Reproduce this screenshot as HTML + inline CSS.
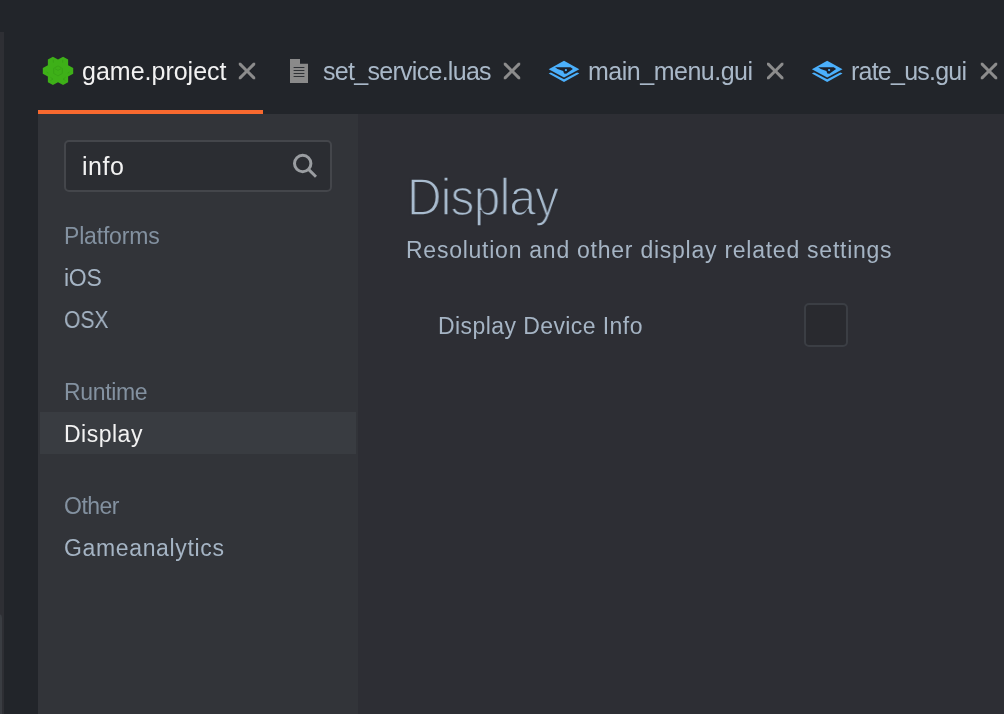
<!DOCTYPE html>
<html><head><meta charset="utf-8"><title>game.project</title>
<style>
html,body{margin:0;padding:0}
body{width:1004px;height:714px;overflow:hidden;background:#22252a;position:relative;font-family:"Liberation Sans",sans-serif;}
.abs{position:absolute}
.t{position:absolute;white-space:nowrap;line-height:1;will-change:transform;}
#strip{left:0;top:32px;width:4px;height:682px;background:#2e2f34}
#side{left:38px;top:114px;width:320px;height:600px;background:#323439}
#main{left:358px;top:114px;width:646px;height:600px;background:#2d2e34}
#uline{left:38px;top:110px;width:225px;height:4px;background:#f8692f}
.tab{font-size:25px;color:#a9b8c8;top:59px}
.tab.sel{color:#f2f2f2}
.hd{font-size:23px;color:#8391a0;left:64px}
.it{font-size:23px;color:#a5b4c4;left:64px}
#selrow{left:40px;top:412px;width:316px;height:42px;background:#393c41}
#search{left:64px;top:140px;width:264px;height:48px;border:2px solid #44464b;border-radius:5px;background:#2b2d32}
#cb{left:804px;top:303px;width:40px;height:40px;border:2px solid #3b3e44;border-radius:5px;background:#292a2f}
svg{position:absolute;overflow:visible}
</style></head><body>
<div class="abs" id="strip"></div>
<div class="abs" id="side"></div>
<div class="abs" id="main"></div>
<div class="abs" id="uline"></div>
<div class="abs" id="thumb" style="left:-8px;top:614px;width:10px;height:130px;border-radius:4px;background:#3a3d42"></div>

<!-- tabs -->
<span class="t tab sel" id="tab1" style="left:82px;letter-spacing:0px">game.project</span>
<span class="t tab" id="tab2" style="left:323px;letter-spacing:-0.71px">set_service.luas</span>
<span class="t tab" id="tab3" style="left:588px;letter-spacing:-0.49px">main_menu.gui</span>
<span class="t tab" id="tab4" style="left:851px;letter-spacing:-0.77px">rate_us.gui</span>

<!-- icons -->
<svg id="icons" width="1004" height="120" style="left:0;top:0" viewBox="0 0 1004 120">
  <g transform="translate(58,70.9)">
    <polygon fill="#3eb018" points="10.13,-5.65 15.20,-2.82 15.20,2.82 10.13,5.65 10.13,11.29 5.07,14.11 0.00,11.29 -5.07,14.11 -10.13,11.29 -10.13,5.65 -15.20,2.82 -15.20,-2.82 -10.13,-5.65 -10.13,-11.29 -5.07,-14.11 0.00,-11.29 5.07,-14.11 10.13,-11.29"/>
    <g fill="none" stroke="#38a316" stroke-width="0.9">
      <polygon points="0,-5 4.4,-2.5 4.4,2.5 0,5 -4.4,2.5 -4.4,-2.5"/>
      <polyline points="-3,-2.2 0,-0.5 3,-2.2"/>
      <polyline points="-4.6,-11 -4.6,-8.2"/><polyline points="4.6,-11 4.6,-8.2"/>
      <polyline points="-11.5,1 -9.5,2.4"/><polyline points="11.5,1 9.5,2.4"/>
      <polyline points="-7.5,6.5 -5,8.2 -7.5,9.6"/><polyline points="7.5,6.5 5,8.2 7.5,9.6"/>
    </g>
  </g>
  <g fill="#8c8c8c">
    <polygon transform="translate(247,71)" points="-8.2,-8.2 -6.1,-8.2 0,-2.1 6.1,-8.2 8.2,-8.2 8.2,-6.1 2.1,0 8.2,6.1 8.2,8.2 6.1,8.2 0,2.1 -6.1,8.2 -8.2,8.2 -8.2,6.1 -2.1,0 -8.2,-6.1"/><polygon transform="translate(512,71)" points="-8.2,-8.2 -6.1,-8.2 0,-2.1 6.1,-8.2 8.2,-8.2 8.2,-6.1 2.1,0 8.2,6.1 8.2,8.2 6.1,8.2 0,2.1 -6.1,8.2 -8.2,8.2 -8.2,6.1 -2.1,0 -8.2,-6.1"/><polygon transform="translate(775.2,71)" points="-8.2,-8.2 -6.1,-8.2 0,-2.1 6.1,-8.2 8.2,-8.2 8.2,-6.1 2.1,0 8.2,6.1 8.2,8.2 6.1,8.2 0,2.1 -6.1,8.2 -8.2,8.2 -8.2,6.1 -2.1,0 -8.2,-6.1"/><polygon transform="translate(989,71)" points="-8.2,-8.2 -6.1,-8.2 0,-2.1 6.1,-8.2 8.2,-8.2 8.2,-6.1 2.1,0 8.2,6.1 8.2,8.2 6.1,8.2 0,2.1 -6.1,8.2 -8.2,8.2 -8.2,6.1 -2.1,0 -8.2,-6.1"/>
  </g>
  <g>
    <polygon points="290,59 300,59 300,63.8 308,63.8 308,83 290,83" fill="#8a8a8a"/>
    <g fill="#2e3135"><rect x="293.6" y="67" width="10.8" height="1"/><rect x="293.6" y="70" width="10.8" height="1"/><rect x="293.6" y="73" width="10.8" height="1"/><rect x="293.6" y="76" width="10.8" height="1"/></g>
  </g>
  <g transform="translate(564,69.2)"><polygon points="0,-3.8 15.3,4.4 0,12.9 -15.3,4.4" fill="#4bb0fc"/><polygon points="0,-6.8 16.4,1.6 0,10 -16.4,1.6" fill="#22252a"/><polygon points="0,-8.4 15.3,0 0,8.3 -15.3,0" fill="#4bb0fc"/><polygon points="-9,-2 6.6,-2 8.9,-0.1 2.2,4.5 0.1,4.2 -0.8,1.7 -6.4,-0.3" fill="#1c212b"/><circle cx="1.9" cy="0.9" r="1.15" fill="#4bb0fc"/></g>
  <g transform="translate(827.2,69.2)"><polygon points="0,-3.8 15.3,4.4 0,12.9 -15.3,4.4" fill="#4bb0fc"/><polygon points="0,-6.8 16.4,1.6 0,10 -16.4,1.6" fill="#22252a"/><polygon points="0,-8.4 15.3,0 0,8.3 -15.3,0" fill="#4bb0fc"/><polygon points="-9,-2 6.6,-2 8.9,-0.1 2.2,4.5 0.1,4.2 -0.8,1.7 -6.4,-0.3" fill="#1c212b"/><circle cx="1.9" cy="0.9" r="1.15" fill="#4bb0fc"/></g>
</svg>

<!-- sidebar -->
<div class="abs" id="search"></div>
<span class="t" id="q" style="left:82px;top:154px;font-size:25px;color:#f2f2f2;letter-spacing:0.55px">info</span>
<svg width="30" height="30" style="left:290px;top:150px" viewBox="290 150 30 30"><circle cx="302.7" cy="163.5" r="8.2" fill="none" stroke="#9a9da1" stroke-width="3"/><line x1="308.8" y1="169.6" x2="316" y2="176.8" stroke="#9a9da1" stroke-width="2.9"/></svg>
<span class="t hd" id="h1" style="top:225px;letter-spacing:-0.18px">Platforms</span>
<span class="t it" id="i1" style="top:267px;letter-spacing:-0.3px">iOS</span>
<span class="t it" id="i2" style="top:309px;transform:scaleX(0.915);transform-origin:0 0">OSX</span>
<span class="t hd" id="h2" style="top:381px;letter-spacing:-0.33px">Runtime</span>
<div class="abs" id="selrow"></div>
<span class="t it" id="i3" style="top:423px;color:#f2f2f2;letter-spacing:0.5px">Display</span>
<span class="t hd" id="h3" style="top:495px;letter-spacing:-0.5px">Other</span>
<span class="t it" id="i4" style="top:537px;letter-spacing:0.65px">Gameanalytics</span>

<!-- main -->
<span class="t" id="title" style="left:407px;top:171.6px;font-size:51.5px;color:#a9bccf;letter-spacing:-0.9px;transform:scaleX(0.93);transform-origin:0 0;-webkit-text-stroke:1.6px #2d2e34">Display</span>
<span class="t" id="sub" style="left:406px;top:239px;font-size:23px;color:#a5b4c4;letter-spacing:0.75px">Resolution and other display related settings</span>
<span class="t" id="lbl" style="left:438px;top:315px;font-size:23px;color:#a5b4c4;letter-spacing:0.42px">Display Device Info</span>
<div class="abs" id="cb"></div>
</body></html>
